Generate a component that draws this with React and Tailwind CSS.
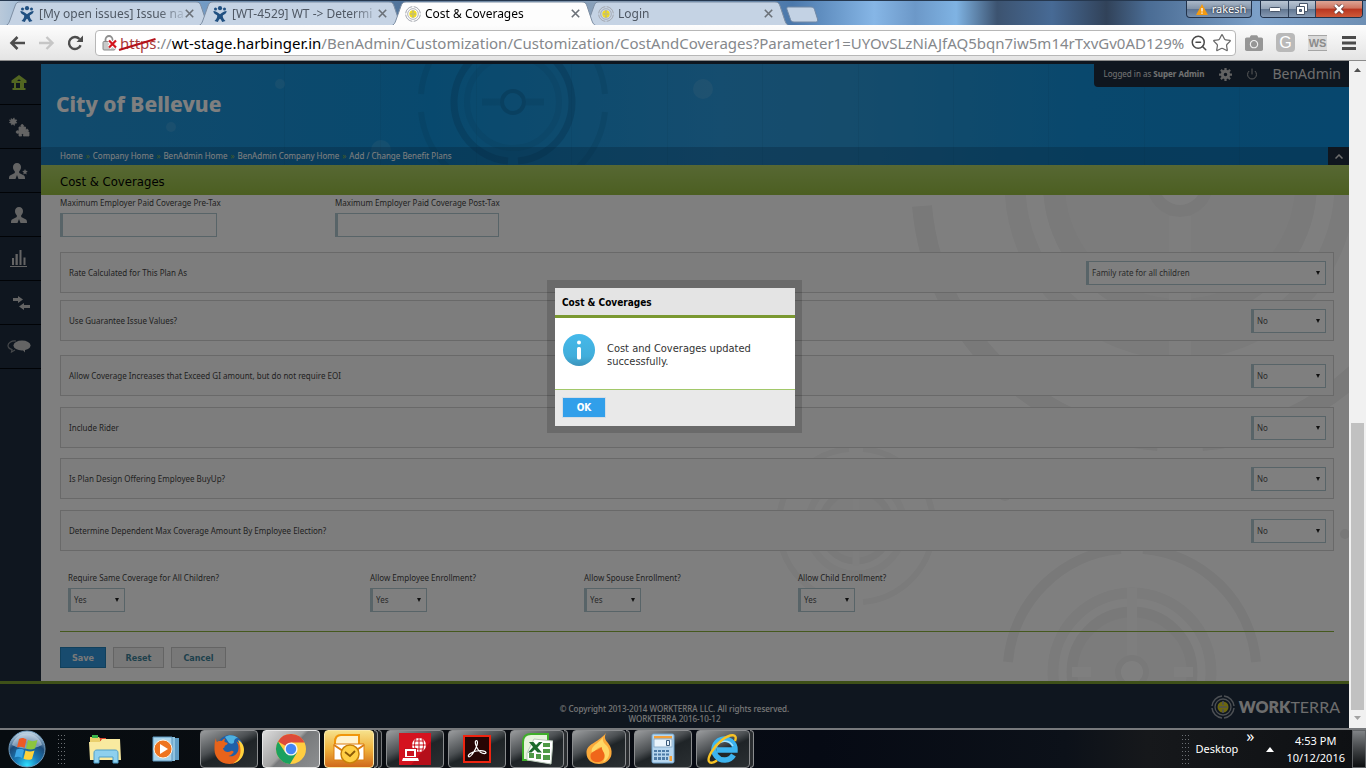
import React, { useState } from "react";
import { FaCamera } from "react-icons/fa";
import { Power, ZoomOut, Star } from "lucide-react";

const tabs = [
    { title: "[My open issues] Issue na", icon: "jira" },
    { title: "[WT-4529] WT -> Determi", icon: "jira" },
    { title: "Cost & Coverages", icon: "target", active: true },
    { title: "Login", icon: "target" },
];

const crumbs = ["Home", "Company Home", "BenAdmin Home", "BenAdmin Company Home", "Add / Change Benefit Plans"];

const questions = [
    { id: "rate", label: "Rate Calculated for This Plan As", value: "Family rate for all children", width: "w-60", gap: "mt-[15px]" },
    { id: "gi", label: "Use Guarantee Issue Values?", value: "No", width: "w-[75px]", gap: "mt-[7px]" },
    { id: "eoi", label: "Allow Coverage Increases that Exceed GI amount, but do not require EOI", value: "No", width: "w-[75px]", gap: "mt-[14px]" },
    { id: "rider", label: "Include Rider", value: "No", width: "w-[75px]", gap: "mt-[11px]" },
    { id: "buyup", label: "Is Plan Design Offering Employee BuyUp?", value: "No", width: "w-[75px]", gap: "mt-[10px]" },
    { id: "depmax", label: "Determine Dependent Max Coverage Amount By Employee Election?", value: "No", width: "w-[75px]", gap: "mt-[11px]" },
];

const enrollments = [
    { id: "same", label: "Require Same Coverage for All Children?", width: "w-[302px]" },
    { id: "employee", label: "Allow Employee Enrollment?", width: "w-[214px]" },
    { id: "spouse", label: "Allow Spouse Enrollment?", width: "w-[214px]" },
    { id: "child", label: "Allow Child Enrollment?", width: "w-[214px]" },
];

function TargetIcon({ size = 16, ring = "#a3a7af", core = "#f2dc1c" }) {
    return (
        <svg width={size} height={size} viewBox="0 0 24 24" fill="none" className="shrink-0">
            <path d="M13 1a11 11 0 0 1 10 10M23 13a11 11 0 0 1-10 10M11 23A11 11 0 0 1 1 13M1 11A11 11 0 0 1 11 1" stroke={ring} strokeWidth="1.5" />
            <circle cx="12" cy="12" r="8" stroke={ring} strokeWidth="1.3" />
            <circle cx="12" cy="12" r="5.500" fill={core} />
            <path d="M12 6v4M12 14v4M8 12h8" stroke={ring} strokeWidth="1.6" />
        </svg>
    );
}

function JiraIcon() {
    return (
        <svg width="14" height="16" viewBox="0 0 14 16" fill="#205081" className="shrink-0">
            <circle cx="2.500" cy="3" r="1.500" />
            <circle cx="7" cy="2.200" r="2.100" />
            <circle cx="11.500" cy="3" r="1.500" />
            <path d="M.3 5c2.500.2 4.500 1.200 6.700 3.300C9.200 6.200 11.200 5.200 13.700 5c-.2 2.500-2 3.200-3.800 4.200-.5 1.700.5 3.700 2.600 5.800l-3.300 1c-.8-1.500-1.300-2.500-2.200-3.200-.9.7-1.400 1.700-2.200 3.200l-3.300-1C3.600 12.900 4.600 10.900 4.100 9.200 2.300 8.200.5 7.500.3 5z" />
        </svg>
    );
}

function BrowserTab({ tab }) {
    return (
        <div className={`relative w-[207px] h-[25px] -mr-3.5 shrink-0 ${tab.active ? "z-20" : "z-10"}`}>
            <svg className="absolute inset-0 w-full h-full" viewBox="0 0 207 25" preserveAspectRatio="none">
                <path d="M0 25C3 24 4 22 5 19L10 5C11 2 12 1 15 1H191C194 1 195 2 196 5L201 20C202 23 204 25 207 25Z" fill={tab.active ? "#fdfdfd" : "#c5d3e4"} stroke="#7d8ea3" strokeWidth="1" />
                {tab.active && <path d="M2 25H206" stroke="#fdfdfd" strokeWidth="2" />}
            </svg>
            <div className="relative h-full flex items-center pl-3.5 pr-[18px]">
                <button type="button" className="flex-1 min-w-0 flex items-center gap-1 text-left">
                    <span className="w-4 shrink-0 flex justify-center">{tab.icon === "jira" ? <JiraIcon /> : <TargetIcon />}</span>
                    <span className={`flex-1 whitespace-nowrap text-xs leading-4 font-['Noto_Sans',sans-serif] ${tab.active ? "text-black" : "text-[#4f5864]"} [mask-image:linear-gradient(90deg,#000_120px,rgba(0,0,0,0.2)_144px)]`}>
                        {tab.title}
                    </span>
                </button>
                <button type="button" aria-label="Close tab" className="text-[#6b7178]">
                    <svg width="9" height="9" viewBox="0 0 9 9" stroke="currentColor" strokeWidth="1.6"><path d="M.8.8l7.400 7.400M8.200.8L.8 8.200" /></svg>
                </button>
            </div>
        </div>
    );
}

function TitleBar() {
    return (
        <div className="relative flex h-[25px] shrink-0 pl-[5px] border-t border-[#26384f] bg-[linear-gradient(90deg,#b9c9da_0%,#8db0d2_3%,#7aa3cd_12%,#4f7299_30%,#8fa5bd_45%,#4b78ab_58%,#86b6e6_64%,#6c98c8_67%,#7fb3e3_70%,#3c5370_73%,#476a95_77%,#314259_81%,#4a6c94_84%,#7ca0c8_92%,#6e8fb4_100%)]">
            {tabs.map((tab) => <BrowserTab key={tab.title} tab={tab} />)}
            <button type="button" aria-label="New tab" className="ml-2 mt-0.5">
                <svg width="34" height="17" viewBox="0 0 34 17"><path d="M3 1h23c2 0 3 1 3.500 2.500l3 9.500c.5 2-.2 3-2 3H9c-2 0-3-1-3.500-2.500L2 3.500C1.600 2 2 1 3 1z" fill="#c3d2e4" stroke="#7088a5" /></svg>
            </button>
            <div className="absolute right-[3px] top-0 flex items-start gap-2">
                <button type="button" className="flex items-center gap-1 h-[17px] w-[66px] pl-1 justify-center rounded-b border border-t-0 border-[#22324a] bg-[linear-gradient(#a9b7c8_0%,#8293a9_50%,#5d7391_50%,#7890ad_100%)] text-[11px] text-white font-['Noto_Sans',sans-serif] [text-shadow:0_0_2px_#000]">
                    <svg width="12" height="11" viewBox="0 0 12 11"><path d="M6 0l6 11H0z" fill="#f39a12" /><path d="M6 4v3.500M6 8.500v1.200" stroke="#fff" strokeWidth="1.300" /></svg>
                    rakesh
                </button>
                <div className="flex h-[17px] rounded-b overflow-hidden border border-t-0 border-[#22324a]">
                    <button type="button" aria-label="Minimize" className="w-[28px] flex items-center justify-center border-r border-[#2f4059] bg-[linear-gradient(#b9c5d3_0%,#93a3b7_50%,#60758f_50%,#8599b3_100%)]">
                        <svg width="12" height="5" viewBox="0 0 12 5"><rect x=".5" y=".5" width="11" height="4" rx="1" fill="#fff" stroke="#49566a" /></svg>
                    </button>
                    <button type="button" aria-label="Restore" className="w-[27px] flex items-center justify-center border-r border-[#2f4059] bg-[linear-gradient(#b9c5d3_0%,#93a3b7_50%,#60758f_50%,#8599b3_100%)]">
                        <svg width="12" height="12" viewBox="0 0 12 12" fill="none"><path d="M3.500.5h8v8h-8z" fill="#fff" stroke="#49566a" /><path d="M.5 3.500h8v8h-8z" fill="#fff" stroke="#49566a" /><path d="M3.500 6.500h2v2h-2z" fill="#6b7f98" stroke="#49566a" /></svg>
                    </button>
                    <button type="button" aria-label="Close" className="w-[46px] flex items-center justify-center bg-[linear-gradient(#dda596_0%,#cf7460_45%,#b83520_50%,#cf5a3a_100%)]">
                        <svg width="12" height="10" viewBox="0 0 12 10" fill="none"><path d="M2 1l8 8M10 1L2 9" stroke="#5c3030" strokeWidth="4" /><path d="M2 1l8 8M10 1L2 9" stroke="#fff" strokeWidth="2.500" /></svg>
                    </button>
                </div>
            </div>
        </div>
    );
}

function Toolbar() {
    return (
        <div className="relative z-20 flex items-center shrink-0 h-9 border-b border-[#8b8b8b] pl-[9px] pr-2.5 bg-gradient-to-b from-[#fdfdfd] to-[#e4e4e4]">
            <button type="button" aria-label="Back" className="w-[29px] text-[#4d4d4d]">
                <svg width="17" height="14" viewBox="0 0 17 14" fill="none" stroke="currentColor" strokeWidth="2.600"><path d="M16 7H3M8.500 1L2.500 7l6 6" /></svg>
            </button>
            <button type="button" aria-label="Forward" className="w-[29px] text-[#c6c6c6]">
                <svg width="17" height="14" viewBox="0 0 17 14" fill="none" stroke="currentColor" strokeWidth="2.400"><path d="M1 7h13M8.500 1l6 6-6 6" /></svg>
            </button>
            <button type="button" aria-label="Reload" className="w-[28px] text-[#4d4d4d]">
                <svg width="17" height="16" viewBox="0 0 17 16" fill="none"><path d="M13.600 10.200A6 6 0 1 1 12.500 4" stroke="currentColor" strokeWidth="2.400" /><path d="M16 .5V7H9.500z" fill="currentColor" /></svg>
            </button>
            <div className="flex flex-1 min-w-0 items-center h-[26px] pl-1.5 pr-[3px] rounded-sm border border-[#b7b7b7] bg-white">
                <svg width="18" height="18" viewBox="0 0 18 18" fill="none" className="shrink-0">
                    <path d="M3.500 8V5.500a3.500 3.500 0 0 1 7 0V8" stroke="#8f8f8f" strokeWidth="1.800" />
                    <rect x="1" y="7.500" width="12" height="8.500" rx="1" fill="#c9c9c9" stroke="#8a8a8a" />
                    <path d="M7 6.500l7 7M14 6.500l-7 7" stroke="#fff" strokeWidth="4" />
                    <path d="M7 6.500l7 7M14 6.500l-7 7" stroke="#d3141c" strokeWidth="2.200" />
                </svg>
                <div className="flex-1 min-w-0 whitespace-nowrap text-[15px] leading-5 font-['Noto_Sans',sans-serif] text-[#85888c]">
                    <span className="relative text-[#a83a3a]">
                        https
                        <svg className="absolute -left-0.5 top-1 w-[calc(100%+2px)] h-4" viewBox="0 0 38 16" preserveAspectRatio="none"><path d="M1 13L37 2" stroke="#b5121b" strokeWidth="2.200" /></svg>
                    </span>
                    ://<span className="text-black">wt-stage.harbinger.in</span>/BenAdmin/Customization/Customization/CostAndCoverages?Parameter1=UYOvSLzNiAJfAQ5bqn7iw5m14rTxvGv0AD129%
                </div>
                <ZoomOut className="w-[18px] h-[18px] shrink-0 text-[#4a4a4a]" />
                <Star className="w-5 h-5 shrink-0 ml-1 text-[#6a6a6a]" strokeWidth={1.5} />
            </div>
            <div className="flex items-center ml-[9px] gap-[13px]">
                <button type="button" aria-label="Screenshot"><FaCamera className="w-[18px] h-[18px] text-[#969696]" /></button>
                <button type="button" className="w-[19px] h-[19px] rounded-sm bg-[#b9b9b9] text-white text-base leading-[19px] font-['Liberation_Sans',sans-serif]">G</button>
                <button type="button" className="w-[19px] h-4 border-y border-[#a5a5a5] bg-[#dadada] text-[11px] leading-3 font-bold text-[#8b8b8b] font-['Liberation_Sans',sans-serif]">
                    WS
                </button>
                <button type="button" aria-label="Menu" className="ml-0.5">
                    <svg width="14" height="14" viewBox="0 0 14 14" fill="#4b4b4b"><path d="M0 0h14v3H0zM0 5.500h14v3H0zM0 11h14v3H0z" /></svg>
                </button>
            </div>
        </div>
    );
}

const person = "M8 0c2.500 0 4 1.700 4 4 0 2-.8 3.500-1.800 4.300V10l4.800 2.500c.8.500 1 1.500 1 3.500H9.500L8 12l-1.500 4H0c0-2 .2-3 1-3.500L5.800 10V8.300C4.800 7.500 4 6 4 4c0-2.300 1.500-4 4-4z";

function Sidebar() {
    const items = [
        ["Home", <svg key="i" width="16" height="15" viewBox="0 0 16 15" fill="#a5cd42" fillRule="evenodd"><path d="M8 0l7.500 5.500V8H13v5h1.500v2h-13v-2H3V8H.5V5.500zM5 8v5h4V8zM6 6h4L8 4.300z" /></svg>],
        ["Plugins", (
            <svg key="i" width="22" height="20" viewBox="0 0 22 20" fill="currentColor" stroke="currentColor">
                <path strokeWidth=".5" d="M3 1.500l1.500 1L6 .8l.8 2L9 3 7.800 4.500 9 6 7 6.200 6.300 8.500 5 7 3.500 8l-.3-1.800-2-.7 1.600-1L1.200 3l2 .2z" />
                <path strokeWidth=".8" d="M11 10h2.500c-1-1.500-.5-2.500.7-2.500S16 8.500 15 10h2.500v2.800c1.500-1 2.800-.6 2.800.8s-1.300 1.800-2.800.8V19H21v-4h-3.500v4h-2.200c.7-1.500.2-2.300-.8-2.300s-1.500.8-.8 2.300H11v-3.200c-1.500 1-2.800.5-2.800-.8s1.300-1.800 2.800-.8z" />
            </svg>
        )],
        ["Favourites", <svg key="i" width="20" height="16" viewBox="0 0 20 16" fill="currentColor"><path d={person} /><path d="M16 6l.8 1.800 2 .2-1.500 1.400.4 2L16 10.400l-1.700 1 .4-2L13.200 8l2-.2z" /></svg>],
        ["Employees", <svg key="i" width="16" height="16" viewBox="0 0 16 16" fill="currentColor"><path d={person} /></svg>],
        ["Reports", <svg key="i" width="17" height="17" viewBox="0 0 17 17" fill="currentColor"><path d="M0 16h17v1H0zM2 8h2v7H2zM5.500 4h2.300v11H5.500zM9.500 0h2v15h-2zM13.500 7.500h2V15h-2z" /></svg>],
        ["Transfer", <svg key="i" width="18" height="14" viewBox="0 0 18 14" fill="currentColor" className="ml-1"><path d="M1 2h5V0l5 3.500L6 7V5H1zM18 9h-6V7l-5 3.500 5 3.500v-2h6z" /></svg>],
        ["Messages", <svg key="i" width="24" height="13" viewBox="0 0 24 13"><path d="M9 1C4 .6 1 3 1 5.500 1 8 3 9 5 9.500L4.500 12 8 10" fill="none" stroke="#8b8f94" strokeWidth="1.200" /><ellipse cx="15" cy="5.500" rx="8.500" ry="5" fill="currentColor" /><path d="M15 9l3 3.500V9z" fill="currentColor" /></svg>],
    ];
    return (
        <nav className="w-[41px] shrink-0 bg-[#1e2d3f] text-[#c9c9c9]">
            {items.map(([name, icon]) => (
                <a key={name} href="#" aria-label={name} className="flex items-center h-11 pr-1 justify-center border-b border-[#02060c]">
                    {icon}
                </a>
            ))}
        </nav>
    );
}

function HeaderArt() {
    return (
        <svg className="absolute left-0 top-0 w-[1308px] h-[101px]" viewBox="41 64 1308 101" fill="none">
            <g stroke="#0d5f92" strokeOpacity=".12">
                <path d="M284.500 64v101M380.500 64v101M476.500 64v101M571.500 64v101M667.500 64v101M762.500 64v101M858.500 64v101M953.500 64v101M1048.500 64v101M1144.500 64v101M1239.500 64v101" />
            </g>
            <g stroke="#0c6297">
                <path d="M508 161a59 59 0 1 1 10 0" strokeWidth="7" strokeOpacity=".35" />
                <circle cx="513" cy="102" r="46" strokeWidth="6" strokeOpacity=".14" />
                <circle cx="513" cy="102" r="11" strokeWidth="4" strokeOpacity=".4" />
                <path d="M605 112a92 92 0 0 1-92 82M605 94a92 92 0 0 0-50-74M421 112a92 92 0 0 0 92 82M421 94a92 92 0 0 1 50-74" strokeWidth="6" strokeOpacity=".2" />
                <path d="M482 102h18M526 102h18" strokeWidth="7" strokeOpacity=".2" />
            </g>
            <g fill="#fff" fillOpacity=".1">
                <circle cx="703" cy="89" r="10" />
                <circle cx="381" cy="150" r="10" />
                <circle cx="280" cy="84" r="5" />
                <circle cx="171" cy="127" r="5" />
            </g>
        </svg>
    );
}

function PageArt() {
    return (
        <svg className="absolute right-0 top-0 w-[1308px] h-[487px]" viewBox="41 195 1308 487" fill="none">
            <circle cx="1180" cy="184" r="165" stroke="#f7f7f7" strokeWidth="21" />
            <circle cx="1180" cy="184" r="126" fill="#f9f9f9" stroke="#f4f4f4" strokeWidth="22" />
            <path d="M1180 216v140" stroke="#fdfdfd" strokeWidth="22" />
            <circle cx="1180" cy="184" r="27" fill="#fff" stroke="#f3f3f3" strokeWidth="12" />
            <path d="M922 206A258 258 0 0 0 1158 441M1202 441A258 258 0 0 0 1438 206" stroke="#f2f2f2" strokeWidth="20" />

            <circle cx="1132" cy="672" r="79" stroke="#f6f6f6" strokeWidth="11" />
            <circle cx="1132" cy="672" r="60" fill="#f9f9f9" stroke="#f3f3f3" strokeWidth="11" />
            <path d="M1132 588v68" stroke="#fdfdfd" strokeWidth="10" />
            <path d="M1072 672h19M1174 672h19" stroke="#fff" strokeWidth="10" />
            <circle cx="1132" cy="672" r="14" fill="#fff" stroke="#f2f2f2" strokeWidth="6" />
            <path d="M1008 662A124 124 0 0 1 1121 549M1143 549A124 124 0 0 1 1256 662" stroke="#f3f3f3" strokeWidth="10" />

            <circle cx="856" cy="526" r="48" stroke="#f8f8f8" strokeWidth="7" />
            <circle cx="856" cy="526" r="35" fill="#fafafa" stroke="#f5f5f5" strokeWidth="7" />
            <path d="M856 486v80" stroke="#fdfdfd" strokeWidth="7" />
            <path d="M779 519A77 77 0 0 1 849 449M863 449A77 77 0 0 1 933 519M779 533A77 77 0 0 0 815 591M933 533A77 77 0 0 1 863 602" stroke="#f6f6f6" strokeWidth="6" />
            <circle cx="1005" cy="495" r="6" fill="#f2f2f2" />
            <circle cx="1345" cy="534" r="5" fill="#f0f0f0" />
        </svg>
    );
}

function GearIcon() {
    return (
        <svg width="13" height="13" viewBox="0 0 26 26" className="ml-[15px]">
            <circle cx="13" cy="13" r="6.500" fill="none" stroke="#c4c4c4" strokeWidth="6" />
            <path d="M13 0v6M13 20v6M0 13h6M20 13h6M3.800 3.800L8 8M18 18l4.200 4.200M22.200 3.800L18 8M8 18l-4.200 4.200" stroke="#c4c4c4" strokeWidth="4.500" />
        </svg>
    );
}

function SelectBox({ id, value, width }) {
    return (
        <div className={`relative shrink-0 ${width}`}>
            <select id={id} defaultValue={value} className="appearance-none block w-full h-6 pl-[3px] pr-4 bg-white border border-l-[3px] border-[#b0c8d0] text-[8px] text-[#555]">
                <option>{value}</option>
            </select>
            <svg className="absolute right-1.5 top-2.5 pointer-events-none" width="4" height="4" viewBox="0 0 4 4"><path d="M0 0h4L2 4z" fill="#222" /></svg>
        </div>
    );
}

function PageHeader() {
    return (
        <header className="relative flex flex-col justify-between shrink-0 h-[104px] border-t-[3px] border-[#1e2d3f] bg-[linear-gradient(90deg,#2494d8_0%,#1193dc_30%,#2a9ade_52%,#2a98d8_62%,#1290da_80%,#0e8edc_100%)]">
            <HeaderArt />
            <div className="absolute right-0 -top-[3px] flex items-center h-[26px] pl-[9px] pr-1.5 rounded-bl-sm bg-[#1e2d3f] text-[#e4e4e4]">
                <span className="text-[8px] font-['Noto_Sans',sans-serif]">Logged in as <b>Super Admin</b></span>
                <GearIcon />
                <Power className="w-3 h-3 ml-3.5 mr-3.5 text-[#b5b5b5]" />
                <span className="pr-0.5 text-sm leading-5 font-['Noto_Sans',sans-serif] text-[#dcdcdc]">BenAdmin</span>
            </div>
            <h1 className="relative pl-[15px] pt-[26px] text-[21px] leading-7 font-extrabold text-white font-['Noto_Sans',sans-serif]">City of Bellevue</h1>
            <div className="relative flex items-center h-[18px] pl-[19px] bg-[#0a3f66]/30 text-[8px] text-white font-['Noto_Sans',sans-serif]">
                {crumbs.map((crumb, i) => (
                    <React.Fragment key={crumb}>
                        {i > 0 && <span className="w-2.5 text-center text-[#8fb84a]">»</span>}
                        <a href="#">{crumb}</a>
                    </React.Fragment>
                ))}
                <button type="button" aria-label="Collapse header" className="ml-auto w-[21px] h-full flex items-center justify-center bg-[#1e2d3f] text-[#ddd]">
                    <svg width="8" height="5" viewBox="0 0 8 5" fill="none" stroke="currentColor" strokeWidth="1.500"><path d="M.5 4.500L4 1l3.500 3.500" /></svg>
                </button>
            </div>
        </header>
    );
}

function PlanForm() {
    return (
        <form onSubmit={(e) => e.preventDefault()} className="relative flex-1 min-h-0 overflow-hidden bg-white pl-[19px] pr-[15px] pt-[3px] text-[8px] leading-[10px] text-[#444] font-['Noto_Sans',sans-serif]">
            <PageArt />
            <div className="relative">
                <div className="flex">
                    <div className="w-[275px]">
                        <label htmlFor="pretax" className="block">Maximum Employer Paid Coverage Pre-Tax</label>
                        <input id="pretax" type="text" className="block mt-[5px] w-[157px] h-6 bg-white border border-l-[3px] border-[#b0c8d0]" />
                    </div>
                    <div>
                        <label htmlFor="posttax" className="block">Maximum Employer Paid Coverage Post-Tax</label>
                        <input id="posttax" type="text" className="block mt-[5px] w-[164px] h-6 bg-white border border-l-[3px] border-[#b0c8d0]" />
                    </div>
                </div>

                {questions.map((q) => (
                    <div key={q.id} className={`flex items-center justify-between h-[41px] pl-2 pr-[7px] border border-[#d2d2d2] bg-[#fbfbfb] ${q.gap}`}>
                        <label htmlFor={q.id}>{q.label}</label>
                        <SelectBox id={q.id} value={q.value} width={q.width} />
                    </div>
                ))}

                <div className="flex pl-2 mt-[22px]">
                    {enrollments.map((item) => (
                        <div key={item.id} className={item.width}>
                            <label htmlFor={item.id} className="block mb-[5px]">{item.label}</label>
                            <SelectBox id={item.id} value="Yes" width="w-[57px]" />
                        </div>
                    ))}
                </div>

                <hr className="mt-[19px] border-t border-[#8bb23c]" />

                <div className="flex gap-[7px] mt-[15px] text-[9px] font-bold font-['DejaVu_Sans_Condensed','DejaVu_Sans',sans-serif]">
                    <button type="submit" className="w-[46px] h-[21px] border border-[#2380b8] bg-[#3196dc] text-[#f3f3f3]">Save</button>
                    <button type="reset" className="w-[51px] h-[21px] border border-[#c8c8c8] bg-[#f1f1f1] text-[#3d8299]">Reset</button>
                    <button type="button" className="w-[55px] h-[21px] border border-[#c8c8c8] bg-[#f1f1f1] text-[#3d8299]">Cancel</button>
                </div>
            </div>
        </form>
    );
}

function PageFooter() {
    return (
        <footer className="relative shrink-0 h-[47px] border-t-[3px] border-[#7da030] bg-[#1e2d3f] pt-5 text-center text-[8px] leading-[10px] font-medium text-[#f0f0f0] font-['Noto_Sans',sans-serif]">
            <p>© Copyright 2013-2014 WORKTERRA LLC. All rights reserved.</p>
            <p>WORKTERRA 2016-10-12</p>
            <div className="absolute right-[9px] top-[11px] flex items-center gap-1 text-[#dadada]">
                <TargetIcon size={24} ring="#9aa0a8" core="#d8cc1c" />
                <span className="text-base leading-6 font-normal font-['Lato',sans-serif]"><b className="font-extrabold">WORK</b>TERRA</span>
            </div>
        </footer>
    );
}

function MessageDialog({ onClose }) {
    return (
        <div className="absolute inset-0 flex items-start justify-center pt-[219px] bg-black/50">
            <div role="dialog" aria-labelledby="dialog-title" className="p-2 pr-[7px] pb-[7px] bg-black/15">
                <div className="w-60 bg-white">
                    <h2 id="dialog-title" className="h-[30px] px-[7px] border-b-[3px] border-[#7a9830] bg-[#e4e4e4] text-[10px] leading-[29px] font-bold text-black">Cost & Coverages</h2>
                    <div className="flex h-[71px] pl-2 pt-4 gap-3">
                        <svg width="32" height="32" viewBox="0 0 32 32" className="shrink-0">
                            <defs>
                                <linearGradient id="info-fill" x1="0" y1="0" x2="0" y2="1">
                                    <stop offset="0" stopColor="#45b9ea" />
                                    <stop offset=".7" stopColor="#41aedb" />
                                    <stop offset="1" stopColor="#3b93bb" />
                                </linearGradient>
                            </defs>
                            <circle cx="16" cy="16" r="16" fill="url(#info-fill)" />
                            <circle cx="16" cy="8.500" r="2" fill="#fff" />
                            <rect x="14" y="13" width="4" height="12.500" rx="1.500" fill="#fff" />
                        </svg>
                        <p className="w-[150px] pt-2 text-[11px] leading-[13px] text-[#333]">Cost and Coverages updated successfully.</p>
                    </div>
                    <div className="flex h-[37px] px-[7px] pt-[7px] border-t border-[#a2c86a] bg-[#e9e9e9]">
                        <button type="button" onClick={onClose} className="w-11 h-[21px] border border-[#d3dde6] bg-[#319fea] text-[10px] font-bold text-white">OK</button>
                    </div>
                </div>
            </div>
        </div>
    );
}

function ScrollBar() {
    return (
        <div className="flex flex-col w-[17px] shrink-0 items-center bg-[#f1f1f1]">
            <svg width="17" height="17" viewBox="0 0 17 17"><path d="M5 11h7L8.500 7z" fill="#505050" /></svg>
            <div className="flex-[346]" />
            <div className="w-[13px] flex-[287] bg-[#c1c1c1]" />
            <svg width="17" height="18" viewBox="0 0 17 18"><path d="M5 6h7l-3.500 4z" fill="#a3a3a3" /></svg>
        </div>
    );
}

const appIcons = {
    firefox: (
        <svg width="32" height="32" viewBox="0 0 32 32">
            <circle cx="17" cy="15" r="13" fill="#1f5fa8" />
            <path d="M12 4c4-3 10-2 13 1-3 0-4 2-4 4s-3 2-5 1z" fill="#4db0e0" />
            <path d="M3 5c0 2 .3 3 1 4 1.500-1 3-1.500 5-1 .5-1.500 2-2.500 3.500-2.500-1 1-1.200 2-.8 3.500l3 1c0 1.500-2 2-3 3 0 1.500-.8 2-1.800 2.500 1.500 4 5.600 4 8.100 2.500 1.500-.8 3 .2 2.500 1.500-1.500 1-2 3-5 3.500 5 1.500 10-2 10-8 0-3-1-5-2-6.500 4 2 6.500 5.500 6.500 10C30 26 24 31 16.500 31 8 31 1.500 25 1.500 16.500 1.500 12 1.500 8 3 5z" fill="#e8631a" />
            <path d="M25 7c4 2 6 6 6 10 0 7-5 12-11 13.500 5-3 7.500-7 7.500-13 0-4-1-7-2.500-10.500z" fill="#ffd23c" />
        </svg>
    ),
    chrome: (
        <svg width="32" height="32" viewBox="0 0 32 32">
            <circle cx="16" cy="16" r="15" fill="#ffcd40" />
            <path d="M16 16L3 8.500A15 15 0 0 1 29.500 9.500H16z" fill="#dd4b39" />
            <path d="M3 8.500A15 15 0 0 0 15 31l7-11.500L16 16l-6 3z" fill="#1ba15f" />
            <circle cx="16" cy="16" r="6.600" fill="#f4f4f4" />
            <circle cx="16" cy="16" r="5.200" fill="#4486f5" />
        </svg>
    ),
    outlook: (
        <svg width="32" height="32" viewBox="0 0 32 32">
            <path d="M2 20V9c0-4 2-7 6-7h18v18z" fill="#fff2cc" stroke="#f0960a" strokeWidth="2" />
            <path d="M1 11h30v16H1z" fill="#fff" stroke="#dc7d10" />
            <path d="M1 12l15 10 15-10" fill="none" stroke="#dc7d10" strokeWidth="2" />
            <circle cx="17" cy="21" r="9" fill="#ffcf45" stroke="#c98208" strokeWidth="1.500" />
            <path d="M12 19l5 4 5-5" fill="none" stroke="#8a5a08" strokeWidth="1.800" />
        </svg>
    ),
    remote: (
        <svg width="32" height="32" viewBox="0 0 32 32">
            <rect width="32" height="32" fill="#d4131f" />
            <path d="M32 0v32H12L32 8z" fill="#b50f1a" />
            <circle cx="20" cy="12" r="7" fill="#fff" />
            <path d="M20 5v14M13 12h14M15 8h10M15 16h10M17 6c-2 4-2 8 0 12M23 6c2 4 2 8 0 12" stroke="#c9121d" fill="none" />
            <path d="M5 15h13v9H5z" fill="#c9121d" />
            <path d="M6 16h11v8H6zM4 25h15l1 3H3z" fill="#fff" />
            <path d="M8 18h7v5H8z" fill="#c9121d" />
        </svg>
    ),
    acrobat: (
        <svg width="28" height="28" viewBox="0 0 28 28">
            <rect x="1" y="1" width="26" height="26" fill="#260504" stroke="#ee2410" strokeWidth="2" />
            <path d="M5.500 21.500c-1-1.500 3-4.500 8-5.500s9 0 9.500 1.500c.3 1.500-3 1.500-5.500-.3C14.500 15 12 9.500 12.300 7c.3-2 2.200-1.700 2.200.5 0 3-3 9-5.500 12-1.500 2-3 2.700-3.500 2z" fill="none" stroke="#fff" strokeWidth="1.200" />
        </svg>
    ),
    excel: (
        <svg width="32" height="32" viewBox="0 0 32 32">
            <path d="M2 27V9c0-5 3-8 8-8h17v26z" fill="#e6f4dc" stroke="#3fae2a" strokeWidth="2" />
            <path d="M13 6l19 2-2 23-24-4V20z" fill="#fff" stroke="#b9c9b9" />
            <path d="M22 10h7v4h-7zM22 16h7v4h-7zM22 22h7v5h-7zM15 21h5v5h-5zM8 20h5v5H8z" fill="#4e9a46" />
            <path d="M8 9h4.500l2.500 3 3-3h3.500l-5 5.500 4.500 5h-4.500l-2.800-3-3.200 3H7l5-5.500z" fill="#1c6b2c" />
        </svg>
    ),
    flame: (
        <svg width="28" height="32" viewBox="0 0 28 32">
            <path d="M21 0c-2 4-1 7 2 10 3 4 4 7 3.500 11C26 27 20 31 14 31 7 31 1.500 27 1.500 20 1.500 10 12 11 21 0z" fill="#fba93a" />
            <path d="M18 4c-1 4 1 6 4 9 4 5 3 13-4 16 2-3 2-6 1-8-1-3-3-4-3-7-4 1-7 4-8 8-5-9 6-11 10-18z" fill="#ffd765" />
            <path d="M17 14c-1 3 3 5 2.500 9-.4 4-3.500 6-7 6-4 0-7-2-7-6 0-5 6-5 11.500-9z" fill="#f0661a" />
        </svg>
    ),
    calculator: (
        <svg width="24" height="32" viewBox="0 0 24 32">
            <rect x="1" y="1" width="22" height="29" rx="1.500" fill="#b7d6ee" stroke="#6fa3cc" />
            <rect x="3" y="3" width="18" height="2.500" fill="#f2a03a" />
            <rect x="3" y="6" width="18" height="8" fill="#eaf4fb" stroke="#7da2c0" strokeWidth=".8" />
            <path d="M15.500 7.500h3v5h-3z" fill="none" stroke="#3a5a7a" />
            <path d="M3 17h3v2H3zM7 17h3v2H7zM11 17h3v2h-3zM15 17h3v2h-3zM3 20.500h3v2H3zM7 20.500h3v2H7zM11 20.500h3v2h-3zM15 20.500h3v2h-3zM3 24h3v3H3zM7 24h3v3H7zM11 24h3v3h-3zM15 24h2v3h-2z" fill="#4d7ba6" />
            <rect x="18.500" y="23" width="2.500" height="5" fill="#f2a03a" />
        </svg>
    ),
    explorer: (
        <svg width="32" height="32" viewBox="0 0 32 32" fill="none">
            <path d="M26.500 22a10.500 10.500 0 1 1 1.500-5H10" stroke="#3db4ef" strokeWidth="5.500" />
            <path d="M9 14a9.500 9.500 0 0 1 17-1" stroke="#a8e4ff" strokeWidth="1.500" />
            <path d="M28 8C31 1 24 0 15 7 6 14 0 25 2 28.500c1.500 2.500 5 1 8-1" stroke="#f7c325" strokeWidth="2.400" />
        </svg>
    ),
};

const windows = [
    { id: "firefox", name: "Firefox", layers: 0 },
    { id: "chrome", name: "Chrome", layers: 0, look: "border-[#e6e6e6] bg-[linear-gradient(135deg,#dcdcdc_0%,#a2a2a2_45%,#77797b_50%,#8d8f91_100%)]" },
    { id: "outlook", name: "Outlook", layers: 2, look: "border-[#fbe9a8] bg-[linear-gradient(180deg,#f6e08a_0%,#f0b23c_50%,#d0691a_100%)]" },
    { id: "remote", name: "Remote Desktop", layers: 0 },
    { id: "acrobat", name: "Acrobat Reader", layers: 0 },
    { id: "excel", name: "Excel", layers: 1 },
    { id: "flame", name: "Messenger", layers: 1 },
    { id: "calculator", name: "Calculator", layers: 0 },
    { id: "explorer", name: "Internet Explorer", layers: 1 },
];

const darkGlass = "border-[#8a8c8e] bg-[linear-gradient(155deg,#9a9c9e_0%,#4c5053_40%,#1f2427_54%,#2a2f32_100%)]";

function Grip() {
    return (
        <svg width="8" height="30" viewBox="0 0 8 30" fill="none" stroke="#6c7074" strokeDasharray="1 3">
            <path d="M.5 1v29M3.500 1v29M6.500 1v29" />
        </svg>
    );
}

function Taskbar() {
    return (
        <div className="flex items-center shrink-0 h-[40px] pl-2 border-t-2 border-[#77797c] bg-[linear-gradient(90deg,#070c10_0%,#0a0d12_35%,#060a14_60%,#0c1119_78%,#16181b_84%,#0e1013_100%)] text-white font-['Noto_Sans',sans-serif]">
            <button type="button" aria-label="Start">
                <svg width="38" height="38" viewBox="0 0 38 38">
                    <defs>
                        <radialGradient id="orb" cx=".5" cy=".95" r=".9">
                            <stop offset="0" stopColor="#2fe0ff" />
                            <stop offset=".35" stopColor="#1a7cb8" />
                            <stop offset=".7" stopColor="#1c4a78" />
                            <stop offset="1" stopColor="#b8cfe0" />
                        </radialGradient>
                    </defs>
                    <circle cx="19" cy="19" r="18" fill="url(#orb)" stroke="#6f9bbd" />
                    <path d="M4 15a15.500 15.500 0 0 1 30 0c-10 5-20 5-30 0z" fill="#d7e6f2" opacity=".5" />
                    <path d="M11 9c3-1.500 5-1 7.500.5L16.500 18c-2.500-1.500-5-1.500-7.500-.5z" fill="#ec5a25" />
                    <path d="M20 10c3 1.500 6 1.500 9.500 0L27 18.500c-3 1.500-6 1.200-9 0z" fill="#8cc63f" />
                    <path d="M8.500 19.500c3-1 5-1 7.500.5L14 28c-2.500-1.500-5-1.500-7.500-.5z" fill="#3da7e6" />
                    <path d="M17.500 20.500c3 1.300 6 1.300 9 0L24 29c-3 1.300-6 1-8.500-.3z" fill="#ffd23a" />
                </svg>
            </button>
            <div className="ml-3"><Grip /></div>
            <button type="button" aria-label="File Explorer" className="ml-[22px]">
                <svg width="34" height="32" viewBox="0 0 34 32">
                    <path d="M2 4h9l2 3h19v20H2z" fill="#e9cf6c" />
                    <path d="M4 2h6v3H4z" fill="#38b54a" /><path d="M12 5h6v3h-6z" fill="#e04a2f" /><path d="M19 7h5v3h-5z" fill="#3c8fd8" />
                    <path d="M1 9h11l2-3h18l1 21H2z" fill="#f9eaa0" />
                    <path d="M6 30V20c0-2 1-3 3-3h18c2 0 3 1 3 3v10h-5v-6H11v6z" fill="#8ed0ee" stroke="#4f9fc8" />
                </svg>
            </button>
            <button type="button" aria-label="Media Player" className="ml-[30px]">
                <svg width="28" height="28" viewBox="0 0 28 28">
                    <path d="M10 3h17v22H10z" fill="#5e9cc4" /><path d="M6 2h17v24H6z" fill="#8fc3e0" /><path d="M1 2h19v24H1z" fill="#a9d4ec" stroke="#5b95bd" />
                    <circle cx="11" cy="14" r="9" fill="#ee7420" stroke="#fff2e0" />
                    <path d="M8 9l8 5-8 5z" fill="#fff" />
                </svg>
            </button>
            <div className="flex items-center gap-1 ml-5">
                {windows.map((win) => (
                    <div key={win.id} className="flex w-[58px] h-[38px]">
                        <button type="button" aria-label={win.name} className={`flex flex-1 items-center justify-center rounded-sm border ${win.look || darkGlass}`}>
                            {appIcons[win.id]}
                        </button>
                        {win.layers > 0 && <span className="w-1 rounded-r-sm border border-l-0 border-[#8a8c8e] bg-[#2a2d30]" />}
                        {win.layers > 1 && <span className="w-1 rounded-r-sm border border-l-0 border-[#77797b] bg-[#1c1f22]" />}
                    </div>
                ))}
            </div>
            <div className="flex items-center h-full ml-auto text-[11px] leading-4">
                <Grip />
                <span className="ml-1.5">Desktop</span>
                <span className="self-start ml-2 text-base leading-3">»</span>
                <svg width="8" height="5" viewBox="0 0 8 5" className="ml-3"><path d="M0 5h8L4 0z" fill="#fff" /></svg>
                <div className="ml-3 text-center leading-[17px]">
                    <div>4:53 PM</div>
                    <div>10/12/2016</div>
                </div>
                <button type="button" aria-label="Show desktop" className="ml-[7px] w-3.5 h-full border border-[#606366] bg-gradient-to-b from-[#808386] to-[#0d0f11]" />
            </div>
        </div>
    );
}

export default function App() {
    const [dialogOpen, setDialogOpen] = useState(true);

    return (
        <div className="flex flex-col h-screen overflow-hidden bg-black">
            <TitleBar />
            <Toolbar />
            <div className="flex flex-1 min-h-0">
                <div className="relative flex flex-col flex-1 min-w-0 font-['DejaVu_Sans_Condensed','DejaVu_Sans',sans-serif]">
                    <div className="flex flex-1 min-h-0">
                        <Sidebar />
                        <main className="flex flex-col flex-1 min-w-0">
                            <PageHeader />
                            <h2 className="shrink-0 h-[30px] pl-[19px] pt-0.5 bg-gradient-to-b from-[#aed066] to-[#98be42] text-[13px] leading-[30px] text-black">Cost & Coverages</h2>
                            <PlanForm />
                        </main>
                    </div>
                    <PageFooter />
                    {dialogOpen && <MessageDialog onClose={() => setDialogOpen(false)} />}
                </div>
                <ScrollBar />
            </div>
            <Taskbar />
        </div>
    );
}
